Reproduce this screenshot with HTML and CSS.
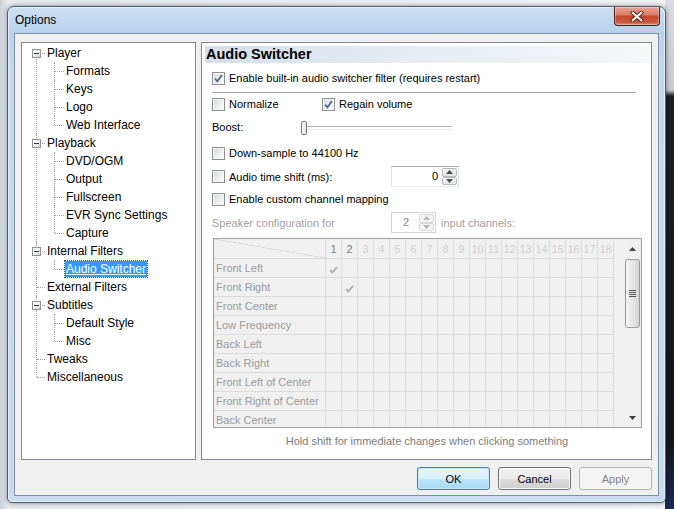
FILE: index.html
```html
<!DOCTYPE html>
<html>
<head>
  <meta charset="UTF-8">
  <title>Options</title>
  <link rel="stylesheet" href="styles.css">
</head>
<body>
  <div class="window">
    <div class="titlebar">
      <span class="title">Options</span>
      <button class="close-btn">
        <svg width="14" height="11" viewBox="0 0 14 11"><path d="M2.5 1.5 L11.5 9.5 M11.5 1.5 L2.5 9.5" stroke="#5a2418" stroke-width="4" stroke-linecap="round"/><path d="M2.5 1.5 L11.5 9.5 M11.5 1.5 L2.5 9.5" stroke="#fff" stroke-width="2" stroke-linecap="round"/></svg>
      </button>
    </div>

    <div class="client">
      <div class="panels">
        <div class="tree-panel">
          <ul class="tree">
            <li><span class="exp"></span><span class="label">Player</span>
              <ul>
                <li><span class="label">Formats</span></li>
                <li><span class="label">Keys</span></li>
                <li><span class="label">Logo</span></li>
                <li><span class="label">Web Interface</span></li>
              </ul>
            </li>
            <li><span class="exp"></span><span class="label">Playback</span>
              <ul>
                <li><span class="label">DVD/OGM</span></li>
                <li><span class="label">Output</span></li>
                <li><span class="label">Fullscreen</span></li>
                <li><span class="label">EVR Sync Settings</span></li>
                <li><span class="label">Capture</span></li>
              </ul>
            </li>
            <li><span class="exp"></span><span class="label">Internal Filters</span>
              <ul>
                <li><span class="label selected">Audio Switcher</span></li>
              </ul>
            </li>
            <li><span class="label">External Filters</span></li>
            <li><span class="exp"></span><span class="label">Subtitles</span>
              <ul>
                <li><span class="label">Default Style</span></li>
                <li><span class="label">Misc</span></li>
              </ul>
            </li>
            <li><span class="label">Tweaks</span></li>
            <li><span class="label">Miscellaneous</span></li>
          </ul>
        </div>

        <div class="page">
          <div class="page-header">Audio Switcher</div>
          <div class="page-body">
            <div class="row row-enable">
              <span class="cb checked"><svg width="11" height="11" viewBox="0 0 11 11"><path d="M2 5.5 L4.3 8.3 L9 2" fill="none" stroke="#4a64a0" stroke-width="1.7"/></svg></span>
              <span>Enable built-in audio switcher filter (requires restart)</span>
            </div>
            <div class="separator"></div>
            <div class="row row-volume">
              <label class="check-item wide"><span class="cb"></span><span>Normalize</span></label>
              <label class="check-item"><span class="cb checked"><svg width="11" height="11" viewBox="0 0 11 11"><path d="M2 5.5 L4.3 8.3 L9 2" fill="none" stroke="#4a64a0" stroke-width="1.7"/></svg></span><span>Regain volume</span></label>
            </div>
            <div class="row row-boost">
              <span class="boost-label">Boost:</span>
              <div class="slider"><span class="thumb"></span></div>
            </div>
            <div class="row row-downsample">
              <span class="cb"></span><span>Down-sample to 44100 Hz</span>
            </div>
            <div class="row row-spin">
              <label class="check-item field-label"><span class="cb"></span><span>Audio time shift (ms):</span></label>
              <div class="spin spin-shift">
                <span class="spin-value">0</span>
                <span class="spin-arrows">
                  <span class="arrow up"><svg width="7" height="4" viewBox="0 0 7 4"><path d="M0 4 L3.5 0 L7 4 Z" fill="#4d4d4d"/></svg></span>
                  <span class="arrow down"><svg width="7" height="4" viewBox="0 0 7 4"><path d="M0 0 L3.5 4 L7 0 Z" fill="#4d4d4d"/></svg></span>
                </span>
              </div>
            </div>
            <div class="row row-custom">
              <span class="cb"></span><span>Enable custom channel mapping</span>
            </div>
            <div class="row row-speaker disabled">
              <span class="field-label">Speaker configuration for</span>
              <div class="spin spin-channels">
                <span class="spin-value">2</span>
                <span class="spin-arrows">
                  <span class="arrow up"><svg width="7" height="4" viewBox="0 0 7 4"><path d="M0 4 L3.5 0 L7 4 Z" fill="#b5b5b5"/></svg></span>
                  <span class="arrow down"><svg width="7" height="4" viewBox="0 0 7 4"><path d="M0 0 L3.5 4 L7 0 Z" fill="#b5b5b5"/></svg></span>
                </span>
              </div>
              <span class="after-spin">input channels:</span>
            </div>

            <div class="mapping">
              <div class="map-table">
                <div class="map-head">
                  <div class="corner"></div>
                  <span class="num active">1</span>
                  <span class="num active">2</span>
                  <span class="num">3</span>
                  <span class="num">4</span>
                  <span class="num">5</span>
                  <span class="num">6</span>
                  <span class="num">7</span>
                  <span class="num">8</span>
                  <span class="num">9</span>
                  <span class="num">10</span>
                  <span class="num">11</span>
                  <span class="num">12</span>
                  <span class="num">13</span>
                  <span class="num">14</span>
                  <span class="num">15</span>
                  <span class="num">16</span>
                  <span class="num">17</span>
                  <span class="num">18</span>
                </div>
                <div class="map-row"><div class="name">Front Left</div><div class="cells"><span class="tick col1"><svg width="9" height="8" viewBox="0 0 9 8"><path d="M1 4 L3.3 6.5 L8 1" fill="none" stroke="#a8a8a8" stroke-width="1.6"/></svg></span></div></div>
                <div class="map-row"><div class="name">Front Right</div><div class="cells"><span class="tick col2"><svg width="9" height="8" viewBox="0 0 9 8"><path d="M1 4 L3.3 6.5 L8 1" fill="none" stroke="#a8a8a8" stroke-width="1.6"/></svg></span></div></div>
                <div class="map-row"><div class="name">Front Center</div><div class="cells"></div></div>
                <div class="map-row"><div class="name">Low Frequency</div><div class="cells"></div></div>
                <div class="map-row"><div class="name">Back Left</div><div class="cells"></div></div>
                <div class="map-row"><div class="name">Back Right</div><div class="cells"></div></div>
                <div class="map-row"><div class="name">Front Left of Center</div><div class="cells"></div></div>
                <div class="map-row"><div class="name">Front Right of Center</div><div class="cells"></div></div>
                <div class="map-row"><div class="name">Back Center</div><div class="cells"></div></div>
              </div>
              <div class="vscroll">
                <span class="sb-btn"><svg width="7" height="4" viewBox="0 0 7 4"><path d="M0 4 L3.5 0 L7 4 Z" fill="#404040"/></svg></span>
                <span class="sb-thumb"><span class="grip"></span></span>
                <span class="sb-track"></span>
                <span class="sb-btn"><svg width="7" height="4" viewBox="0 0 7 4"><path d="M0 0 L3.5 4 L7 0 Z" fill="#404040"/></svg></span>
              </div>
            </div>

            <div class="hint">Hold shift for immediate changes when clicking something</div>
          </div>
        </div>
      </div>

      <div class="buttons">
        <button class="btn default">OK</button>
        <button class="btn">Cancel</button>
        <button class="btn" disabled>Apply</button>
      </div>
    </div>
  </div>
</body>
</html>
```

FILE: styles.css
```css
* {
  box-sizing: border-box;
}

body {
  width: 674px;
  height: 509px;
  margin: 0;
  overflow: hidden;
  font-family: "Liberation Sans", Arial, sans-serif;
  font-size: 11px;
  color: #000;
  background:
    linear-gradient(to bottom, #d9dde2 0, #c8ccd2 90px, #1e1f24 96px, #15161a 440px, #1b2a55 509px) right top / 9px 100% no-repeat,
    linear-gradient(to right, #c9d0d8 0, #e7eaee 8px, #f3f4f6 100%);
}

/* window frame */
.window {
  margin: 6px 0 0 7px;
  width: 659px;
  height: 497px;
  border: 1px solid #4c5e71;
  border-radius: 7px 7px 5px 5px;
  background: linear-gradient(to bottom, #cde0f4 0, #b8d1eb 26px, #c3d8ee 60px, #c8dcf1 100%);
  box-shadow: 0 0 5px rgba(0, 0, 0, 0.45), inset 0 0 0 1px rgba(255, 255, 255, 0.55);
  padding: 0 6px 6px 6px;
  display: flex;
  flex-direction: column;
}

.titlebar {
  height: 26px;
  display: flex;
  justify-content: space-between;
  align-items: flex-start;
  padding-left: 1px;
}

.title {
  margin-top: 6px;
  font-size: 12px;
  line-height: 15px;
  color: #000;
}

.close-btn {
  width: 46px;
  height: 19px;
  margin-right: -1px;
  padding: 0;
  border: 1px solid #4a1f18;
  border-top: none;
  border-radius: 0 0 4px 4px;
  background: linear-gradient(to bottom, #e9a899 0, #d67a62 45%, #c3472b 50%, #cc5a3c 85%, #dc8f73 100%);
  box-shadow: inset 0 0 0 1px rgba(255, 255, 255, 0.35);
  display: flex;
  align-items: center;
  justify-content: center;
}

.client {
  flex: 1;
  border: 1px solid #7d90a5;
  background: #f0f0f0;
  padding: 8px 6px 0 6px;
}

.panels {
  display: flex;
  gap: 5px;
  height: 418px;
}

/* tree */
.tree-panel {
  width: 175px;
  border: 1px solid #828790;
  background: #fff;
}

.tree,
.tree ul {
  list-style: none;
  margin: 0;
  padding: 0;
}

.tree {
  padding-top: 1px;
  font-size: 12px;
}

.tree li {
  position: relative;
  padding-left: 24px;
}

.tree li::before {
  content: '';
  position: absolute;
  left: 14px;
  top: 0;
  bottom: 0;
  border-left: 1px dotted #a0a0a0;
}

.tree > li:first-child::before {
  top: 9px;
}

.tree li:last-child::before {
  bottom: auto;
  height: 9px;
}

.tree li::after {
  content: '';
  position: absolute;
  left: 15px;
  top: 9px;
  width: 8px;
  border-top: 1px dotted #a0a0a0;
}

.tree ul li {
  padding-left: 19px;
}

.tree ul li::before {
  left: 8px;
}

.tree ul li::after {
  left: 9px;
  width: 9px;
}

.label {
  display: inline-block;
  position: relative;
  z-index: 1;
  height: 16px;
  line-height: 16px;
  margin: 1px 0;
  padding: 0 1px;
  color: #000;
}

.label.selected {
  background: #3399ff;
  color: #fff;
  text-decoration: underline;
  outline: 1px dotted #1c5ea5;
}

.exp {
  position: absolute;
  z-index: 2;
  left: 10px;
  top: 5px;
  width: 9px;
  height: 9px;
  border: 1px solid #929292;
  background: linear-gradient(135deg, #ffffff 0, #f0f0f0 50%, #d8d8d8 100%);
}

.exp::after {
  content: '';
  position: absolute;
  left: 1px;
  top: 3px;
  width: 5px;
  height: 1px;
  background: #1f3d63;
}

/* page */
.page {
  width: 451px;
  border: 1px solid #828790;
  background: #fff;
}

.page-header {
  margin: 3px 2px 0 3px;
  height: 17px;
  line-height: 17px;
  padding-left: 1px;
  font-size: 14.5px;
  font-weight: bold;
  background: linear-gradient(to right, #d6dfe9 0, #e6ecf2 45%, #f5f7f9 100%);
}

.page-body {
  padding: 0 9px 0 10px;
}

.row {
  display: flex;
  align-items: center;
  height: 14px;
  white-space: nowrap;
}

.row-enable { margin-top: 8px; }
.row-volume { margin-top: 4px; }
.row-boost { margin-top: 9px; }
.row-downsample { margin-top: 12px; }
.row-spin { margin-top: 6px; height: 21px; }
.row-custom { margin-top: 5px; }
.row-speaker { margin-top: 6px; height: 21px; }

.separator {
  margin-top: 7px;
  width: 424px;
  height: 1px;
  background: #a0a0a0;
}

.check-item {
  display: flex;
  align-items: center;
}

.check-item.wide {
  width: 110px;
}

.field-label {
  width: 179px;
}

.cb {
  display: inline-flex;
  align-items: center;
  justify-content: center;
  width: 13px;
  height: 13px;
  margin-right: 4px;
  border: 1px solid #8e8f8f;
  background: linear-gradient(135deg, #d4d6d9 0, #eef0f1 60%, #fbfbfb 100%);
  box-shadow: inset 0 0 0 1px #f6f6f6;
  flex: none;
}

.boost-label {
  width: 89px;
}

.slider {
  position: relative;
  width: 151px;
  height: 14px;
}

.slider::before {
  content: '';
  position: absolute;
  left: 3px;
  right: 0;
  top: 6px;
  height: 2px;
  border-top: 1px solid #b0b0b0;
  border-bottom: 1px solid #e8e8e8;
}

.thumb {
  position: absolute;
  left: 0;
  top: 1px;
  width: 6px;
  height: 14px;
  border: 1px solid #7a7a7a;
  border-radius: 2px;
  background: linear-gradient(to right, #fafafa, #e4e4e4);
}

.spin {
  display: flex;
  height: 21px;
  border: 1px solid #abadb3;
  border-color: #abadb3 #dbdfe6 #e3e9ef #e2e3ea;
  background: #fff;
  padding: 1px;
}

.spin-shift {
  width: 68px;
}

.spin-channels {
  width: 45px;
}

.spin-value {
  flex: 1;
  line-height: 17px;
  text-align: right;
  padding-right: 4px;
}

.spin-channels .spin-value {
  text-align: center;
  padding-right: 0;
}

.spin-arrows {
  width: 15px;
  display: flex;
  flex-direction: column;
}

.arrow {
  flex: 1;
  display: flex;
  align-items: center;
  justify-content: center;
  border: 1px solid #b7b9bd;
  border-radius: 2px;
  background: linear-gradient(to bottom, #f7f7f7, #e3e3e3);
}

.disabled {
  color: #a0a0a0;
}

.disabled .spin {
  border-color: #d5d5d5;
}

.disabled .spin-value {
  color: #8a8a8a;
}

.disabled .arrow {
  border-color: #d7d7d7;
  background: #f4f4f4;
}

.after-spin {
  margin-left: 5px;
}

/* channel mapping grid */
.mapping {
  margin: 5px 0 0 1px;
  width: 429px;
  height: 190px;
  border: 1px solid #a0a0a0;
  background: #f0f0f0;
  display: flex;
  overflow: hidden;
}

.map-table {
  width: 400px;
}

.map-head,
.map-row {
  display: flex;
  border-bottom: 1px solid #dcdcdc;
}

.map-head {
  height: 20px;
}

.map-row {
  height: 19px;
}

.corner {
  width: 112px;
  border-right: 1px solid #dcdcdc;
  background: linear-gradient(to top right, transparent calc(50% - 0.6px), #d0d0d0 50%, transparent calc(50% + 0.6px));
}

.num {
  width: 16px;
  border-right: 1px solid #dcdcdc;
  text-align: center;
  line-height: 20px;
  font-size: 11px;
  color: #d2d2d2;
}

.num.active {
  color: #7c7c7c;
}

.name {
  width: 112px;
  padding-left: 2px;
  line-height: 18px;
  color: #9b9b9b;
  border-right: 1px solid #dcdcdc;
  white-space: nowrap;
}

.cells {
  flex: 1;
  position: relative;
  background: repeating-linear-gradient(to right, transparent 0, transparent 15px, #dcdcdc 15px, #dcdcdc 16px);
}

.tick {
  position: absolute;
  top: 5px;
}

.tick.col1 { left: 3px; }
.tick.col2 { left: 19px; }

.vscroll {
  width: 17px;
  margin-left: auto;
  display: flex;
  flex-direction: column;
  background: #f0f0f0;
}

.sb-btn {
  height: 19px;
  display: flex;
  align-items: center;
  justify-content: center;
}

.sb-thumb {
  margin: 1px 1px 0 1px;
  height: 69px;
  border: 1px solid #989898;
  border-radius: 3px;
  background: linear-gradient(to right, #f5f5f5 0, #e6e6e6 50%, #d4d4d4 100%);
  display: flex;
  align-items: center;
  justify-content: center;
}

.grip {
  width: 7px;
  height: 7px;
  background: repeating-linear-gradient(to bottom, #555 0, #555 1px, transparent 1px, transparent 2px);
}

.sb-track {
  flex: 1;
}

.hint {
  margin-top: 6px;
  text-align: center;
  line-height: 14px;
  color: #7d7d7d;
}

/* dialog buttons */
.buttons {
  display: flex;
  justify-content: flex-end;
  gap: 8px;
  margin-top: 7px;
}

.btn {
  width: 73px;
  height: 23px;
  padding: 0;
  font-family: "Liberation Sans", Arial, sans-serif;
  font-size: 11px;
  color: #000;
  border: 1px solid #707070;
  border-radius: 3px;
  background: linear-gradient(to bottom, #f2f2f2 0, #ebebeb 50%, #dddddd 50%, #cfcfcf 100%);
  box-shadow: inset 0 0 0 1px #fcfcfc;
}

.btn.default {
  border-color: #3c7fb1;
  background: linear-gradient(to bottom, #eaf6fd 0, #d9f0fc 50%, #bee6fd 50%, #a7d9f5 100%);
  box-shadow: inset 0 0 0 1px #c7e7f8;
}

.btn:disabled {
  color: #838383;
  border-color: #adb2b5;
  background: #f4f4f4;
  box-shadow: none;
}
```
